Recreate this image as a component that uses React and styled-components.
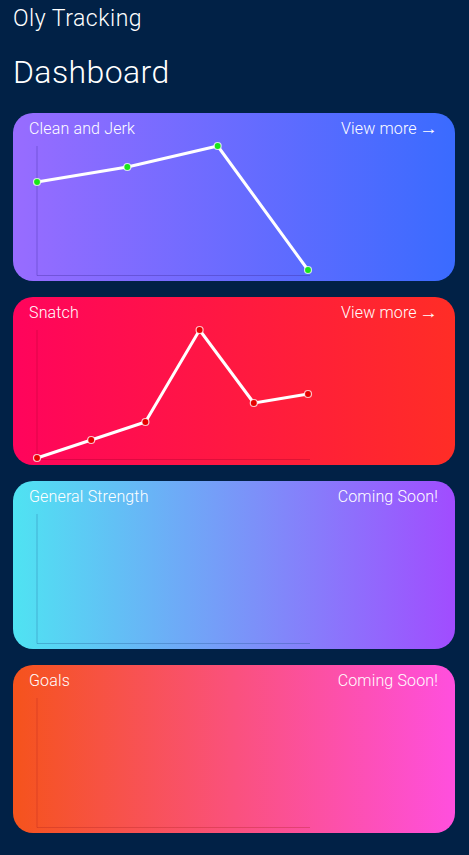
import styled, { createGlobalStyle } from "styled-components";

const GlobalStyle = createGlobalStyle`
  html, body {
    margin: 0;
    padding: 0;
    background-color: #012146;
  }
  body {
    font-family: Roboto, "Liberation Sans", sans-serif;
    color: #ffffff;
  }
`;

const Page = styled.div`
  padding: 5px 14px 20px 13px;
  min-height: 855px;
  box-sizing: border-box;
`;
const Brand = styled.div`
  font-size: 23px;
  font-weight: 300;
  line-height: 27px;
  letter-spacing: 0.5px;
`;
const Title = styled.h1`
  margin: 22px 0 22px;
  font-size: 32px;
  font-weight: 300;
  line-height: 37px;
  letter-spacing: 0.4px;
`;
const Cards = styled.div`
  display: flex;
  flex-flow: column nowrap;
  gap: 16px;
`;
const Card = styled.div`
  height: 168px;
  box-sizing: border-box;
  border-radius: 20px;
  padding: 6px 17px 0 16px;
  background: linear-gradient(90deg, ${(p) => p.from}, ${(p) => p.to});
  display: flex;
  flex-flow: column nowrap;
`;
const CardHead = styled.div`
  display: flex;
  justify-content: space-between;
  font-size: 16px;
  font-weight: 300;
  line-height: 19px;
  letter-spacing: 0.15px;
`;
const Link = styled.span`
  cursor: pointer;
`;
const Arrow = styled.span`
  display: inline-block;
  margin-left: 1px;
  transform: scaleX(1.15);
  transform-origin: right center;
`;
const Chart = styled.svg`
  display: block;
  margin: 8px 0 0 7px;
  overflow: visible;
`;

const cards = [
  {
    title: "Clean and Jerk",
    action: "View more",
    arrow: true,
    from: "#986cff",
    to: "#3a6bff",
    axis: "rgba(60, 40, 150, 0.35)",
    dot: "#19e619",
    points: [36, 21, 0, 124],
  },
  {
    title: "Snatch",
    action: "View more",
    arrow: true,
    from: "#ff045c",
    to: "#ff2d26",
    axis: "rgba(150, 0, 40, 0.3)",
    dot: "#e60000",
    points: [128, 110, 92, 0, 73, 64],
  },
  {
    title: "General Strength",
    action: "Coming Soon!",
    from: "#4fe3f2",
    to: "#a14cff",
    axis: "rgba(30, 80, 140, 0.3)",
    points: [],
  },
  {
    title: "Goals",
    action: "Coming Soon!",
    from: "#f5531c",
    to: "#ff4fde",
    axis: "rgba(170, 30, 30, 0.3)",
    points: [],
  },
];

function LineChart({ points, axis, dot }) {
  const w = 271;
  const step = points.length > 1 ? w / (points.length - 1) : 0;
  const coords = points.map((y, i) => [1 + i * step, y]);
  return (
    <Chart width="276" height="131" viewBox="0 0 276 131">
      <polyline
        points="1,0 1,129.5 274,129.5"
        fill="none"
        stroke={axis}
        strokeWidth="1"
      />
      {coords.length > 0 && (
        <polyline
          points={coords.map((c) => c.join(",")).join(" ")}
          fill="none"
          stroke="#ffffff"
          strokeWidth="3"
          strokeLinejoin="round"
        />
      )}
      {coords.map(([x, y], i) => (
        <circle
          key={i}
          cx={x}
          cy={y}
          r="3.5"
          fill={dot}
          stroke="rgba(255,255,255,0.75)"
          strokeWidth="1.2"
        />
      ))}
    </Chart>
  );
}

export default function App() {
  return (
    <>
      <GlobalStyle />
      <Page>
        <Brand>Oly Tracking</Brand>
        <Title>Dashboard</Title>
        <Cards>
          {cards.map((c) => (
            <Card key={c.title} from={c.from} to={c.to}>
              <CardHead>
                <span>{c.title}</span>
                <Link>
                  {c.action}
                  {c.arrow && <> <Arrow>{"\u2192"}</Arrow></>}
                </Link>
              </CardHead>
              <LineChart points={c.points} axis={c.axis} dot={c.dot} />
            </Card>
          ))}
        </Cards>
      </Page>
    </>
  );
}
